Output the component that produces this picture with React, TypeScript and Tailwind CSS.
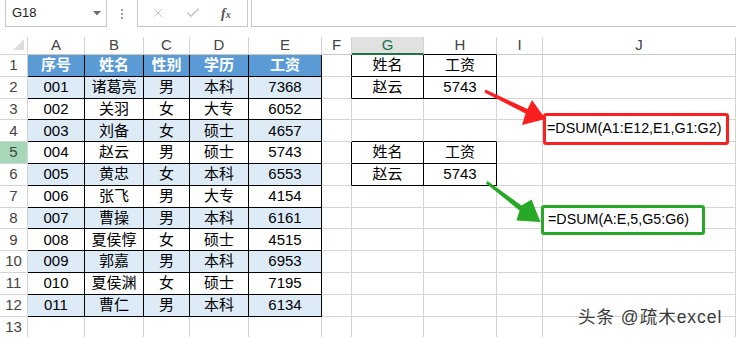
import { Check, X } from 'lucide-react'

const COLS = ['', 'A', 'B', 'C', 'D', 'E', 'F', 'G', 'H', 'I', 'J']

const STAFF = [
  ['序号', '姓名', '性别', '学历', '工资'],
  ['001', '诸葛亮', '男', '本科', '7368'],
  ['002', '关羽', '女', '大专', '6052'],
  ['003', '刘备', '女', '硕士', '4657'],
  ['004', '赵云', '男', '硕士', '5743'],
  ['005', '黄忠', '女', '本科', '6553'],
  ['006', '张飞', '男', '大专', '4154'],
  ['007', '曹操', '男', '本科', '6161'],
  ['008', '夏侯惇', '女', '硕士', '4515'],
  ['009', '郭嘉', '男', '本科', '6953'],
  ['010', '夏侯渊', '女', '硕士', '7195'],
  ['011', '曹仁', '男', '本科', '6134'],
]

// criteria tables in G:H
const CRITERIA: Record<number, [string, string]> = {
  1: ['姓名', '工资'],
  2: ['赵云', '5743'],
  5: ['姓名', '工资'],
  6: ['赵云', '5743'],
}

const inStaff = (r: number, c: number) => r >= 1 && r <= 12 && c >= 1 && c <= 5
const inCriteria = (r: number, c: number) => r in CRITERIA && (c === 7 || c === 8)

function cellText(r: number, c: number) {
  if (inStaff(r, c)) return STAFF[r - 1][c - 1]
  if (inCriteria(r, c)) return CRITERIA[r][c - 7]
  return ''
}

function Cell({ r, c }: { r: number; c: number }) {
  const staff = inStaff(r, c)
  const blackRight = staff || inCriteria(r, c) || inCriteria(r, c + 1)
  const blackBottom = staff || inCriteria(r, c) || inCriteria(r + 1, c)

  let bg = 'bg-white'
  let text = 'text-black'
  if (staff && r === 1) {
    bg = 'bg-[#5b9bd5]'
    text = 'text-white font-bold'
  } else if (staff && r % 2 === 0) {
    bg = 'bg-[#ddebf7]'
  }

  return (
    <div
      className={`flex items-center justify-center overflow-hidden whitespace-nowrap border-r border-b text-[15px] ${bg} ${text} ${
        blackRight ? 'border-r-black' : 'border-r-[#d4d4d4]'
      } ${blackBottom ? 'border-b-black' : 'border-b-[#d4d4d4]'}`}
    >
      {cellText(r, c)}
    </div>
  )
}

function FormulaBar() {
  return (
    <div className="flex h-[37px] items-start">
      {/* Name box */}
      <div className="ml-[5px] flex h-[27px] w-[102px] items-center justify-between border-x border-b border-[#c6c6c6] pl-[6px] pr-[5px] text-[13px] text-[#222]">
        <span>G18</span>
        <svg width="8" height="5" viewBox="0 0 8 5">
          <path d="M0 0h8L4 4.5z" fill="#6d6d6d" />
        </svg>
      </div>
      <div className="flex w-[30px] flex-col items-center gap-[2px] pt-[9px]">
        <span className="h-[2px] w-[2px] bg-[#9a9a9a]" />
        <span className="h-[2px] w-[2px] bg-[#9a9a9a]" />
        <span className="h-[2px] w-[2px] bg-[#9a9a9a]" />
      </div>
      <div className="flex h-[27px] w-[111px] items-center border-x border-b border-[#c6c6c6] pl-[13px]">
        <X className="h-[14px] w-[14px] text-[#c2c2c2]" strokeWidth={1.6} />
        <Check className="ml-[20px] h-[16px] w-[16px] text-[#c2c2c2]" strokeWidth={2} />
        <span className="ml-[20px] font-['Liberation_Serif',serif] text-[14px] font-bold italic text-[#555]">
          f<span className="text-[10px]">x</span>
        </span>
      </div>
      <div className="ml-[3px] h-[27px] flex-1 border-b border-l border-[#c6c6c6]" />
    </div>
  )
}

function Sheet() {
  const rows = Array.from({ length: 13 }, (_, i) => i + 1)
  return (
    <div className="grid grid-cols-[28px_57px_59px_46px_59px_73px_30px_72px_73px_46px_193px] grid-rows-[18px_repeat(13,21.8px)]">
      {/* column headers */}
      {COLS.map((col, c) => {
        if (c === 0)
          return (
            <div key="corner" className="flex items-end justify-end border-r border-b border-[#d4d4d4] pr-[3px] pb-[4px]">
              <svg width="11" height="11" viewBox="0 0 11 11">
                <path d="M11 0v11H0z" fill="#dcdcdc" />
              </svg>
            </div>
          )
        const selected = col === 'G'
        return (
          <div
            key={col}
            className={`flex items-center justify-center border-r border-[#d4d4d4] text-[15px] ${
              selected
                ? 'border-b-2 border-b-[#217346] bg-[#e1e1e1] text-[#217346]'
                : col === 'H'
                  ? 'border-b border-b-black text-[#444]'
                  : 'border-b border-b-[#c8c8c8] text-[#444]'
            }`}
          >
            {col}
          </div>
        )
      })}
      {rows.map((r) => [
        <div
          key={`h${r}`}
          className={`flex items-center justify-center border-r border-b border-[#d4d4d4] text-[15px] text-[#444] ${
            r === 5 ? 'bg-[#a6d8b8]' : 'bg-white'
          }`}
        >
          {r}
        </div>,
        ...COLS.slice(1).map((_, i) => <Cell key={`${r}-${i}`} r={r} c={i + 1} />),
      ])}
    </div>
  )
}

export default function App() {
  return (
    <div className="relative h-[337px] w-[736px] overflow-hidden bg-white font-['Liberation_Sans','Noto_Sans_CJK_SC',sans-serif]">
      <FormulaBar />
      <Sheet />

      {/* callout arrows */}
      <svg className="pointer-events-none absolute inset-0" width="736" height="337" viewBox="0 0 736 337">
        <polygon
          points="485.5,89.5 527.5,109 532,100 545.5,119 522,125 525.5,113.5 484.5,92.5"
          fill="#fb2020"
        />
        <polygon
          points="487.5,181 521.5,205.5 531.5,199.5 540.5,222 516.5,220.5 519.5,210.5 486,183.5"
          fill="#27a827"
        />
      </svg>

      {/* formula callouts */}
      <div className="absolute left-[543px] top-[113px] flex h-[32px] w-[186px] items-center rounded-[3px] border-[3px] border-[#fb2020] bg-white pl-[1px] text-[14.3px] text-black">
        =DSUM(A1:E12,E1,G1:G2)
      </div>
      <div className="absolute left-[541px] top-[205px] flex h-[30px] w-[164px] items-center rounded-[3px] border-[3px] border-[#27a827] bg-white pl-[4px] text-[14.3px] text-black">
        =DSUM(A:E,5,G5:G6)
      </div>

      {/* watermark */}
      <div className="absolute left-[578px] top-[304px] text-[17.5px] tracking-[1px] text-[#3a3a3a] [text-shadow:0_0_2px_#fff,0_0_2px_#fff]">
        头条 @疏木excel
      </div>
    </div>
  )
}
